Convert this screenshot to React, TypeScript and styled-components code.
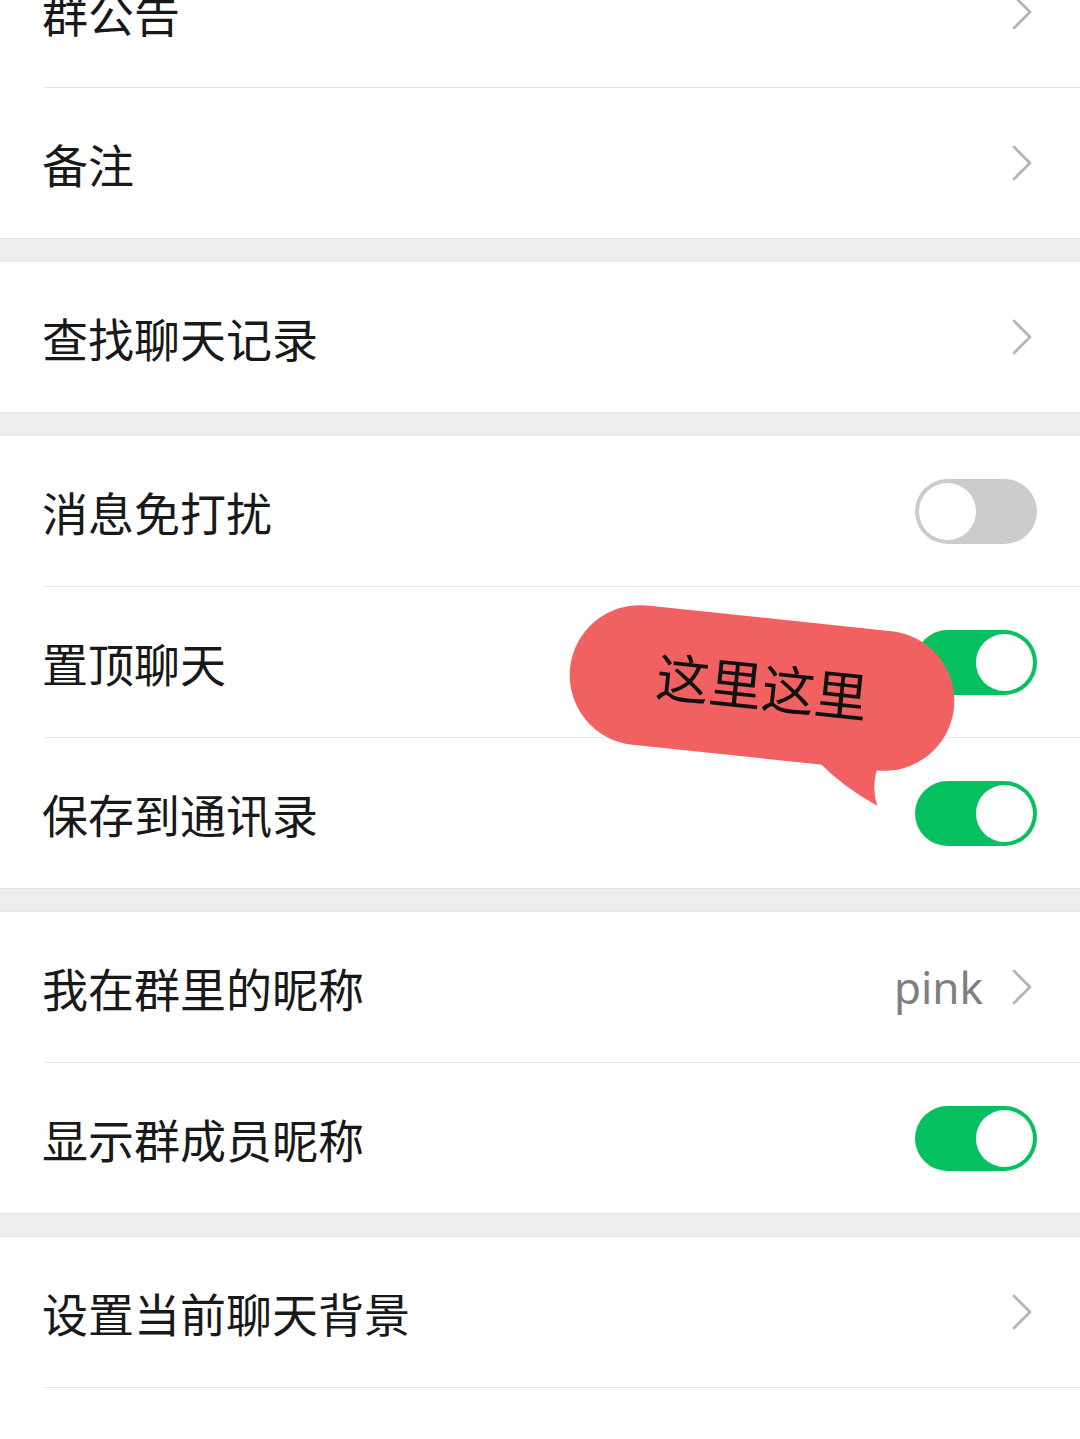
import React from "react";
import styled, { createGlobalStyle } from "styled-components";

const Global = createGlobalStyle`
  html, body { margin: 0; padding: 0; background: #ffffff; }
  body { font-family: "Noto Sans CJK SC", "Noto Sans", sans-serif; }
  * { box-sizing: border-box; }
`;

const Page = styled.div`
  position: relative;
  width: 1080px;
  height: 1439px;
  overflow: hidden;
  background: #ffffff;
`;

const List = styled.div`
  display: flex;
  flex-direction: column;
  margin-top: -63px;
`;

const Group = styled.section`
  display: flex;
  flex-direction: column;
  background: #ffffff;
`;

const Gap = styled.div`
  height: 24px;
  background: #ededed;
  border-top: 1px solid #e4e4e4;
  border-bottom: 1px solid #e8e8e8;
`;

const Row = styled.div`
  padding-left: 44px;
  background: #ffffff;
`;

const RowInner = styled.div<{ $divider: boolean }>`
  height: ${(p) => (p.$divider ? 151 : 150)}px;
  display: flex;
  align-items: center;
  justify-content: space-between;
  padding-right: 43px;
  border-bottom: ${(p) => (p.$divider ? "1px solid #e6e6e6" : "none")};
`;

const Label = styled.span`
  font-family: "Noto Sans CJK SC", "Noto Sans", sans-serif;
  font-size: 46px;
  line-height: 1;
  color: #191919;
  margin-left: -2px;
`;

const Right = styled.div`
  display: flex;
  align-items: center;
  gap: 28px;
`;

const Value = styled.span`
  font-family: "Noto Sans", "Open Sans", sans-serif;
  font-size: 44px;
  line-height: 1;
  color: #7f7f7f;
`;

const ChevronSvg = styled.svg`
  display: block;
  width: 22px;
  height: 36px;
  margin-right: 4px;
`;

const Chevron = () => (
  <ChevronSvg viewBox="0 0 22 36">
    <path
      d="M3 2 L19 18 L3 34"
      fill="none"
      stroke="#b5b5b5"
      strokeWidth="2.8"
      strokeLinecap="round"
      strokeLinejoin="round"
    />
  </ChevronSvg>
);

const Track = styled.div<{ $on: boolean }>`
  width: 122px;
  height: 65px;
  border-radius: 33px;
  padding: 4px;
  display: flex;
  justify-content: ${(p) => (p.$on ? "flex-end" : "flex-start")};
  background: ${(p) => (p.$on ? "#07c160" : "#cccccc")};
`;

const Knob = styled.div`
  width: 57px;
  height: 57px;
  border-radius: 50%;
  background: #ffffff;
`;

const Toggle = ({ on }: { on: boolean }) => (
  <Track $on={on}>
    <Knob />
  </Track>
);

const BubbleSvg = styled.svg`
  position: absolute;
  left: 540px;
  top: 580px;
  width: 460px;
  height: 250px;
  pointer-events: none;
`;

const Bubble = () => (
  <BubbleSvg viewBox="540 580 460 250">
    <g transform="rotate(6 762 688)">
      <rect x="569" y="618" width="386" height="140" rx="70" ry="70" fill="#f16161" />
      <path d="M820 750 Q848 776 889 793 Q879 772 888 744 Z" fill="#f16161" />
      <text
        x="762"
        y="707"
        textAnchor="middle"
        fontFamily='"Noto Sans CJK SC", "Noto Sans", sans-serif'
        fontSize="53"
        fill="#111111"
      >
        这里这里
      </text>
    </g>
  </BubbleSvg>
);

type Item = {
  label: string;
  kind: "chevron" | "toggle";
  on?: boolean;
  value?: string;
};

const groups: Item[][] = [
  [
    { label: "群公告", kind: "chevron" },
    { label: "备注", kind: "chevron" },
  ],
  [{ label: "查找聊天记录", kind: "chevron" }],
  [
    { label: "消息免打扰", kind: "toggle", on: false },
    { label: "置顶聊天", kind: "toggle", on: true },
    { label: "保存到通讯录", kind: "toggle", on: true },
  ],
  [
    { label: "我在群里的昵称", kind: "chevron", value: "pink" },
    { label: "显示群成员昵称", kind: "toggle", on: true },
  ],
  [
    { label: "设置当前聊天背景", kind: "chevron" },
    { label: "", kind: "chevron" },
  ],
];

export default function App() {
  return (
    <>
      <Global />
      <Page>
        <List>
          {groups.map((g, gi) => (
            <React.Fragment key={gi}>
              {gi > 0 && <Gap />}
              <Group>
                {g.map((it, i) => (
                  <Row key={i}>
                    <RowInner $divider={i < g.length - 1}>
                      <Label>{it.label}</Label>
                      {it.label !== "" && (
                        <Right>
                          {it.value && <Value>{it.value}</Value>}
                          {it.kind === "chevron" ? <Chevron /> : <Toggle on={!!it.on} />}
                        </Right>
                      )}
                    </RowInner>
                  </Row>
                ))}
              </Group>
            </React.Fragment>
          ))}
        </List>
        <Bubble />
      </Page>
    </>
  );
}
